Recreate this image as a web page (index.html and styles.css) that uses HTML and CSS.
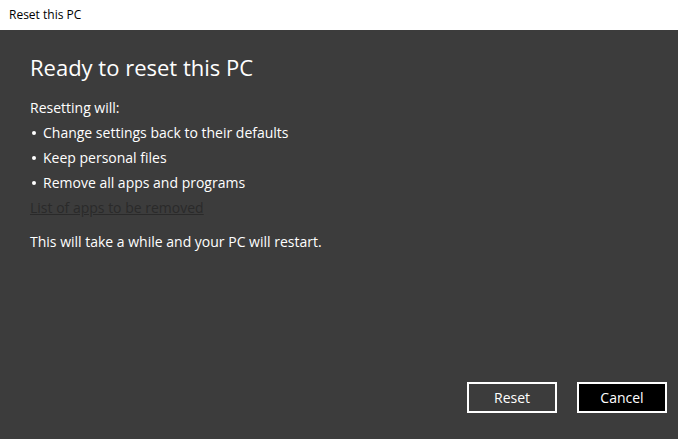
FILE: index.html
```html
<!DOCTYPE html>
<html>
<head>
<meta charset="utf-8">
<link rel="stylesheet" href="styles.css">
</head>
<body>
<div class="window">
  <div class="titlebar">Reset this PC</div>
  <div class="content">
    <h1 class="heading">Ready to reset this PC</h1>
    <div class="body">
      <p class="line">Resetting will:</p>
      <ul class="list">
        <li>Change settings back to their defaults</li>
        <li>Keep personal files</li>
        <li>Remove all apps and programs</li>
      </ul>
      <a class="link" href="#">List of apps to be removed</a>
      <p class="line note">This will take a while and your PC will restart.</p>
    </div>
    <div class="actions">
      <button class="btn">Reset</button>
      <button class="btn btn-primary">Cancel</button>
    </div>
  </div>
</div>
</body>
</html>
```
FILE: styles.css
```css
html, body {
  margin: 0;
  padding: 0;
  height: 100%;
}
body {
  font-family: "Open Sans", "Noto Sans", sans-serif;
  background: #3c3c3c;
}
.window {
  display: flex;
  flex-direction: column;
  height: 100vh;
}
.titlebar {
  height: 30px;
  flex: none;
  background: #ffffff;
  color: #000;
  font-size: 12px;
  line-height: 30px;
  padding-left: 9px;
  box-sizing: border-box;
}
.content {
  flex: 1;
  display: flex;
  flex-direction: column;
  padding: 0 11px 26px 30px;
  color: #ffffff;
}
.heading {
  margin: 20px 0 0 0;
  font-weight: 400;
  font-size: 22px;
  line-height: 34px;
}
.body {
  margin-top: 11px;
  font-size: 14px;
  line-height: 25px;
}
.line {
  margin: 0;
}
.list {
  margin: 0;
  padding: 0;
  list-style: none;
}
.list li {
  position: relative;
  padding-left: 13px;
}
.list li::before {
  content: "";
  position: absolute;
  left: 2px;
  top: 11px;
  width: 4px;
  height: 4px;
  border-radius: 50%;
  background: #fff;
}
.link {
  display: block;
  color: #2a2a2a;
  text-decoration: underline;
}
.note {
  margin-top: 9px;
}
.actions {
  margin-top: auto;
  display: flex;
  justify-content: flex-end;
  gap: 20px;
}
.btn {
  width: 90px;
  height: 31px;
  box-sizing: border-box;
  border: 2px solid #ffffff;
  background: transparent;
  color: #ffffff;
  font-family: inherit;
  font-size: 14px;
  padding: 0;
}
.btn-primary {
  background: #000000;
}
```
